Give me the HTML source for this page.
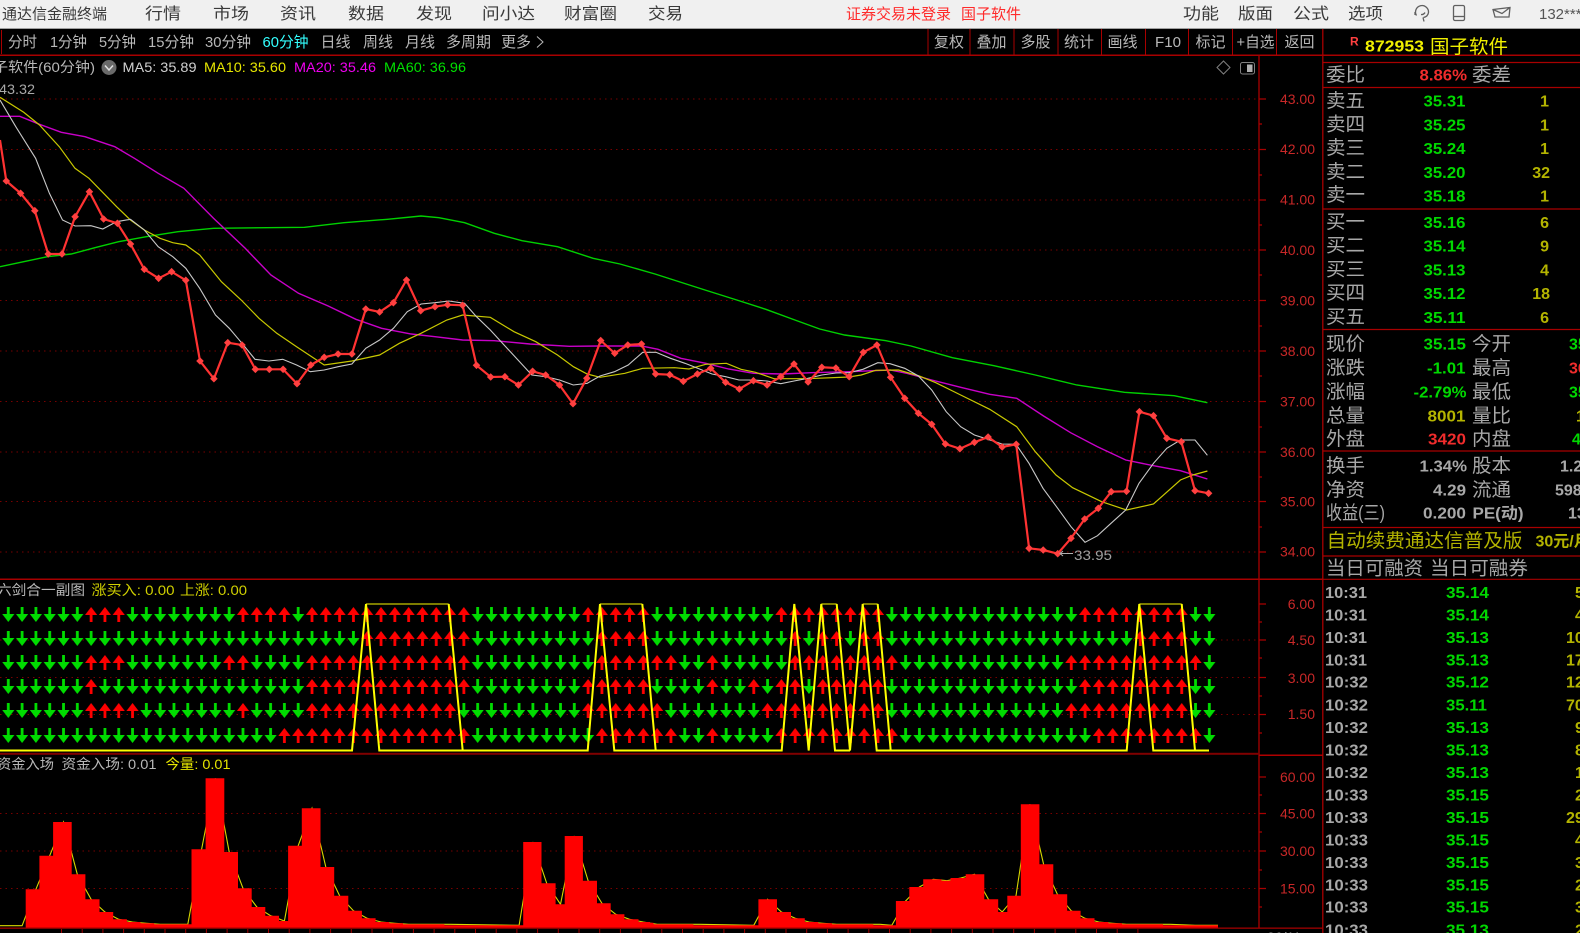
<!DOCTYPE html>
<html lang="zh"><head><meta charset="utf-8"><title>通达信金融终端</title>
<style>
html,body{margin:0;padding:0;background:#000;width:1580px;height:933px;overflow:hidden}
svg{display:block}
text{font-family:"Liberation Sans","Noto Sans CJK SC",sans-serif}
.m{font-size:16px;fill:#3a3a3a}
.t{font-size:15px;fill:#b8b8b8}
.l{font-size:19px;fill:#a8a8a8}
.v{font-size:16px;font-weight:bold}
.g{fill:#00d800}.r{fill:#f02c2c}.o{fill:#b4b400}.w{fill:#a8a8a8}
.a{font-size:14px;fill:#c82828;text-anchor:end}
.h{font-size:14px}
.e{text-anchor:end}
</style></head><body>
<svg width="1580" height="933" viewBox="0 0 1580 933" xmlns="http://www.w3.org/2000/svg">
<defs>
<pattern id="u" patternUnits="userSpaceOnUse" x="0" y="0" width="1" height="15" viewBox="0 0 13.805 15" preserveAspectRatio="none"><path fill="#f00" d="M6.9 0L13 8H8.300V15H5.500V8H0.800z"/></pattern>
<pattern id="d" patternUnits="userSpaceOnUse" x="0" y="0" width="1" height="15" viewBox="0 0 13.805 15" preserveAspectRatio="none"><path fill="#00dc00" d="M5.500 0H8.300V7H13L6.900 15L0.800 7H5.500z"/></pattern>
<marker id="k" markerUnits="userSpaceOnUse" markerWidth="8" markerHeight="8" refX="4" refY="4"><path d="M4 0.200L7.800 4L4 7.800L0.200 4z" fill="#ff4040"/></marker>
</defs>
<rect width="1580" height="933" fill="#000"/>

<!-- top bar -->
<rect width="1580" height="28" fill="#f0f0f0"/>
<rect y="28" width="1580" height="1" fill="#a0a0a0"/>
<text class="m" x="2" y="19" style="font-size:15px" textLength="105" lengthAdjust="spacingAndGlyphs">通达信金融终端</text>
<text class="m" x="145" y="19" textLength="36" lengthAdjust="spacingAndGlyphs">行情</text>
<text class="m" x="213" y="19" textLength="36" lengthAdjust="spacingAndGlyphs">市场</text>
<text class="m" x="280" y="19" textLength="36" lengthAdjust="spacingAndGlyphs">资讯</text>
<text class="m" x="348" y="19" textLength="36" lengthAdjust="spacingAndGlyphs">数据</text>
<text class="m" x="416" y="19" textLength="36" lengthAdjust="spacingAndGlyphs">发现</text>
<text class="m" x="482" y="19" textLength="53" lengthAdjust="spacingAndGlyphs">问小达</text>
<text class="m" x="564" y="19" textLength="53" lengthAdjust="spacingAndGlyphs">财富圈</text>
<text class="m" x="648" y="19" textLength="35" lengthAdjust="spacingAndGlyphs">交易</text>
<text x="846" y="19" style="font-size:15px;fill:#ff2a2a" textLength="105" lengthAdjust="spacingAndGlyphs">证券交易未登录</text>
<text x="961" y="19" style="font-size:15px;fill:#ff2a2a" textLength="60" lengthAdjust="spacingAndGlyphs">国子软件</text>
<text class="m" x="1183" y="19" textLength="36" lengthAdjust="spacingAndGlyphs">功能</text>
<text class="m" x="1238" y="19" textLength="35" lengthAdjust="spacingAndGlyphs">版面</text>
<text class="m" x="1293" y="19" textLength="36" lengthAdjust="spacingAndGlyphs">公式</text>
<text class="m" x="1348" y="19" textLength="35" lengthAdjust="spacingAndGlyphs">选项</text>
<g fill="none" stroke="#606060" stroke-width="1.300">
<path d="M1416.500 15.500A6.500 6.500 0 1 1 1428.500 12.500C1428 15.500 1426 17 1423.500 17.500M1423 17.500L1424 21.500"/><path d="M1415 12v3M1421 14.500a4 4 0 0 0 4 -2"/>
<rect x="1453.500" y="5.500" width="11" height="15" rx="1.500"/><path d="M1454 16.500h10"/>
<path d="M1493 9.500L1510 7.500L1509 17H1495z M1493 9.500L1502 13.500L1510 7.500"/>
</g>
<text x="1539" y="19" style="font-size:15px;fill:#555">132***</text>

<!-- toolbar -->
<rect x="1" y="30" width="1" height="24" fill="#a80000"/>
<rect y="54.500" width="1580" height="1.500" fill="#a80000"/>
<g>
<text class="t" x="8" y="47" textLength="29" lengthAdjust="spacingAndGlyphs">分时</text>
<text class="t" x="50" y="47" textLength="37" lengthAdjust="spacingAndGlyphs">1分钟</text>
<text class="t" x="99" y="47" textLength="37" lengthAdjust="spacingAndGlyphs">5分钟</text>
<text class="t" x="148" y="47" textLength="46" lengthAdjust="spacingAndGlyphs">15分钟</text>
<text class="t" x="205" y="47" textLength="46" lengthAdjust="spacingAndGlyphs">30分钟</text>
<text x="262.500" y="47" style="font-size:15px;fill:#33ffff" textLength="46" lengthAdjust="spacingAndGlyphs">60分钟</text>
<text class="t" x="320.500" y="47" textLength="30" lengthAdjust="spacingAndGlyphs">日线</text>
<text class="t" x="363" y="47" textLength="30" lengthAdjust="spacingAndGlyphs">周线</text>
<text class="t" x="405" y="47" textLength="30" lengthAdjust="spacingAndGlyphs">月线</text>
<text class="t" x="446" y="47" textLength="45" lengthAdjust="spacingAndGlyphs">多周期</text>
<text class="t" x="501" y="47" textLength="30" lengthAdjust="spacingAndGlyphs">更多</text>
<path d="M537 36.500L543 42L537 47.500" fill="none" stroke="#b8b8b8"/>
<text class="t" x="934" y="47" textLength="30" lengthAdjust="spacingAndGlyphs">复权</text>
<text class="t" x="976.500" y="47" textLength="30" lengthAdjust="spacingAndGlyphs">叠加</text>
<text class="t" x="1020.500" y="47" textLength="30" lengthAdjust="spacingAndGlyphs">多股</text>
<text class="t" x="1064" y="47" textLength="30" lengthAdjust="spacingAndGlyphs">统计</text>
<text class="t" x="1107.500" y="47" textLength="30" lengthAdjust="spacingAndGlyphs">画线</text>
<text class="t" x="1155" y="47" textLength="26" lengthAdjust="spacingAndGlyphs">F10</text>
<text class="t" x="1195.500" y="47" textLength="30" lengthAdjust="spacingAndGlyphs">标记</text>
<text class="t" x="1236.500" y="47" textLength="38" lengthAdjust="spacingAndGlyphs">+自选</text>
<text class="t" x="1284.500" y="47" textLength="30" lengthAdjust="spacingAndGlyphs">返回</text>
</g>
<path fill="none" stroke="#a80000" d="M928 29V55M970 29V55M1014 29V55M1058 29V55M1101.500 29V55M1145.500 29V55M1188.500 29V55M1232.500 29V55M1276.500 29V55"/>

<!-- main grid -->
<path fill="none" stroke="#780000" stroke-dasharray="1.500 4" d="M0 99H1259M0 149.500H1259M0 200H1259M0 250H1259M0 300.500H1259M0 351H1259M0 401.500H1259M0 452H1259M0 501.500H1259M0 552H1259M0 640H1259M0 677.500H1259M0 714.500H1259M0 813.500H1259M0 851H1259M0 888.500H1259"/>
<!-- axis -->
<path fill="none" stroke="#a80000" stroke-width="1.300" d="M1259 55V928M1322.800 29V933M1259 99h7M1259 124h3M1259 149.500h7M1259 175h3M1259 200h7M1259 225h3M1259 250h7M1259 275h3M1259 300.500h7M1259 326h3M1259 351h7M1259 376h3M1259 401.500h7M1259 427h3M1259 452h7M1259 477h3M1259 501.500h7M1259 527h3M1259 552h7M1259 604h7M1259 622h3M1259 640h7M1259 658h3M1259 677.500h7M1259 696h3M1259 714.500h7M1259 733h3M1259 777h7M1259 795h3M1259 813.500h7M1259 832h3M1259 851h7M1259 870h3M1259 888.500h7M1259 907h3"/>
<text class="a" x="1315" y="104">43.00</text><text class="a" x="1315" y="154">42.00</text><text class="a" x="1315" y="204.500">41.00</text><text class="a" x="1315" y="255">40.00</text><text class="a" x="1315" y="305.500">39.00</text><text class="a" x="1315" y="356">38.00</text><text class="a" x="1315" y="406.500">37.00</text><text class="a" x="1315" y="457">36.00</text><text class="a" x="1315" y="506.500">35.00</text><text class="a" x="1315" y="556.500">34.00</text>
<text class="a" x="1315" y="609">6.00</text><text class="a" x="1315" y="645">4.50</text><text class="a" x="1315" y="683">3.00</text><text class="a" x="1315" y="719">1.50</text>
<text class="a" x="1315" y="782">60.00</text><text class="a" x="1315" y="818.500">45.00</text><text class="a" x="1315" y="856">30.00</text><text class="a" x="1315" y="893.500">15.00</text>

<!-- panel headers -->
<text class="h" x="-7" y="72" style="fill:#b8b8b8" textLength="102" lengthAdjust="spacingAndGlyphs">子软件(60分钟)</text>
<circle cx="109" cy="67.500" r="7.500" fill="#6a6a6a"/><path d="M105 65.500L109 70L113 65.500" fill="none" stroke="#e0e0e0" stroke-width="1.500"/>
<text class="h" x="122.500" y="72" style="fill:#d0d0d0" textLength="74" lengthAdjust="spacingAndGlyphs">MA5: 35.89</text>
<text class="h" x="204" y="72" style="fill:#e6e600" textLength="82" lengthAdjust="spacingAndGlyphs">MA10: 35.60</text>
<text class="h" x="294" y="72" style="fill:#ee00ee" textLength="82" lengthAdjust="spacingAndGlyphs">MA20: 35.46</text>
<text class="h" x="384" y="72" style="fill:#00e000" textLength="82" lengthAdjust="spacingAndGlyphs">MA60: 36.96</text>
<text class="h" x="-1" y="94" style="fill:#a8a8a8" textLength="36" lengthAdjust="spacingAndGlyphs">43.32</text>
<path d="M1223.500 61L1230 67.500L1223.500 74L1217 67.500z" fill="none" stroke="#808080"/>
<rect x="1240.500" y="62.500" width="14" height="11.500" rx="2" fill="none" stroke="#808080"/><rect x="1247" y="64.500" width="5.500" height="7.500" fill="#b0b0b0"/>

<!-- price chart lines -->
<polyline fill="none" stroke="#00d000" stroke-width="1.400" points="0,266.700 23.700,261.700 47.400,256.700 71.200,254 94.900,247.700 118.600,241.700 146.300,236.700 177.900,231.700 213.500,228.300 304.500,227.300 344,222.700 387.500,219.300 421,216 438.900,217.700 464.600,222.700 494.300,233.300 522,240.700 557.500,246.700 593.100,258.300 620,264 655,274 705,290 736.800,300 765.800,309.300 794.900,320 819.700,329 844.600,335 886,340.700 911,346 952.400,357.700 993.900,365.700 1035.300,375 1076.800,385 1124.500,392.300 1174.200,395.700 1207.400,402.700"/>
<polyline fill="none" stroke="#c800c8" stroke-width="1.400" points="0,116.300 19.800,116.300 39.500,124.300 61.300,132.300 85,136.700 114.700,146.700 134.400,158.300 158.200,173.300 183.900,188.300 213.500,218.300 245.200,248.300 270.900,275 298.500,293.300 328.200,306 355.900,319.300 381.600,328.300 411.200,334 435,336.700 462.600,340 494.300,340.700 529.900,344 569.400,346.300 600,346 641.500,346 658,349.300 680.800,358.300 705.700,363.300 728.500,369 753.400,373.300 782.400,374 811.400,372.700 848.800,371.700 890.200,370 906.800,373.300 931.700,380 960.700,387.300 989.700,394.300 1016.700,398.300 1043.600,416 1070.600,432.700 1097.500,446.700 1125.700,460 1153.500,465.700 1180.400,470.700 1207.400,479"/>
<polyline fill="none" stroke="#c8c800" stroke-width="1.200" points="0,97.300 23.700,112.300 39.500,125 59.300,146.700 75,168.300 89,178.300 116.600,206.700 130.500,220 144.300,230 160,238.300 172.800,242.700 185.800,245 199.700,255 221.400,281.700 241.200,300 259,318.300 276.800,333.300 296.600,346.700 324.200,365 351.900,361 379.600,355 399.400,343.300 421,333.300 446.800,320 462.600,315 490.300,317.300 514,331.700 535.800,341.700 557.500,355 573.400,366.700 587.200,374 600,377.300 624.900,373.300 642.700,368.300 674.600,367.700 689,369 705.700,364.300 726.400,363.300 741,369.300 755.500,372.300 774,378.700 807.300,378.700 848.800,377 861.200,375 875.700,370.300 898.500,370 919.200,376 935.800,382.700 960.700,395 989.700,409.300 1016.700,426.700 1035.300,451.700 1056,475 1072.600,487.700 1101.700,501.700 1126.500,510 1153.500,504 1180.400,480 1192.900,475 1207.400,471"/>
<polyline fill="none" stroke="#c8c8c8" stroke-width="1.100" points="0,100 15.800,126.700 35.600,158.300 49.400,193.300 62.500,220 75.100,226 90.900,225.700 102.800,229 116.600,221.700 130.500,219.300 144.300,230 158.200,246.700 172.800,256.700 185.800,268.300 199.700,288.300 215.500,315 229.300,328.300 242,343.300 255,359.300 268.900,361 282.700,359.300 296.600,365 310.400,371.700 324.200,370 338.100,366.700 351.900,364 365.800,348.300 379.600,340 393.400,328.300 407.300,311.700 421.100,304 435,302.700 448.800,301 464.600,303.300 476.500,316.700 490.300,330 504.100,345 518,360 531.800,375 545.700,376.700 559.500,380 573.300,385 587.200,383.300 600,376 614.500,371.700 628.200,365 642.700,352.300 656,352.300 670.500,358.300 685,363.300 699.500,369 712,374 725.600,376.700 739,380 753.400,380 767,381 780.800,383.700 794,381 808,378.300 821.800,375 836,373 849,372.700 863,369.300 877.800,362.700 890,363.700 904.700,368.300 918.400,376 931.700,390 946.200,411.700 960.700,426.700 974.400,435 988,439.300 1002,444 1016,444.300 1029,463.300 1043,488.300 1057.700,508.300 1071,526.700 1085,542.300 1097.500,535.700 1111,523.300 1125.700,510 1139,483.300 1153.500,463.300 1166.800,448.300 1180.400,440 1195,440 1207.400,455.300"/>
<polyline fill="none" stroke="#ff3232" stroke-width="2.200" marker-mid="url(#k)" marker-end="url(#k)" points="0,140 6.300,181 20.600,193.300 34.800,210.700 48.200,254 62,254 75.100,216.700 89.400,191.700 103.600,219 117.400,223.300 130.500,244 144.300,269.300 158.600,278.300 171.600,271.700 185.800,280.300 200,361 213.900,378.700 227.800,342.700 242,345 255.400,369.300 269.300,369.300 283.100,369.300 297,383.700 310.800,365 324.200,357.300 338.100,354 351.900,354 365.800,309 379.600,312 393.400,302.700 406.500,280 420.700,310.700 435,306.700 447.600,304.700 462.600,305.300 476.500,365.300 490.700,377 504.900,376.700 518.400,385 532.600,371.300 545.700,375 559.500,385 573,403.700 586.800,378.300 600.700,340.500 614.700,353.300 627.800,345 641.500,344 655.600,374 669.700,374.700 683.300,381.300 697.400,374 710.700,368.300 725.600,382.300 739.300,389 753.400,380.700 767.100,385 780.800,376.700 794,364 808.100,382 821.800,367.300 835.900,368 849.200,376.700 863.300,352.300 876.900,345 890.600,377.300 904.700,398.300 918.400,413.300 931.700,424.300 945.400,444 959.900,448.700 974.400,442.300 988.100,437 1002.200,447 1016.200,444.300 1029.100,548.300 1043.200,550 1057.700,553.700 1071,538.300 1084.700,519 1098.300,508.300 1111.200,491.700 1126.500,491.300 1139.400,411.700 1153.500,415.700 1166.800,438.300 1181.300,441.700 1195,490.700 1208.600,493.300"/>
<path d="M1061 553.500h12" stroke="#b0b0b0" fill="none"/><path d="M1063 551l-3 2.500l3 2.500" stroke="#b0b0b0" fill="none"/>
<text x="1074" y="560" style="font-size:14px;fill:#a0a0a0" textLength="38" lengthAdjust="spacingAndGlyphs">33.95</text>

<!-- panel separators -->
<rect y="578.500" width="1323" height="1.500" fill="#a80000"/>
<rect y="752.800" width="1259" height="2" fill="#800000"/>
<rect x="1259" y="754.500" width="64" height="1.500" fill="#b00000"/>

<!-- panel 2 -->
<text class="h" x="-3" y="595" style="fill:#b8b8b8" textLength="88" lengthAdjust="spacingAndGlyphs">六剑合一副图</text>
<text class="h" x="91.500" y="595" style="fill:#d0d000" textLength="83" lengthAdjust="spacingAndGlyphs">涨买入: 0.00</text>
<text class="h" x="180" y="595" style="fill:#d0d000" textLength="67" lengthAdjust="spacingAndGlyphs">上涨: 0.00</text>

<g transform="translate(1.400,607) scale(13.805,1)">
<path fill="url(#d)" d="M0 0h6v15h-6zM9 0h8v15h-8zM21 0h1v15h-1zM34 0h8v15h-8zM47 0h9v15h-9zM64 0h14v15h-14zM86 0h2v15h-2z"/>
<path fill="url(#u)" d="M6 0h3v15h-3zM17 0h4v15h-4zM22 0h12v15h-12zM42 0h5v15h-5zM56 0h8v15h-8zM78 0h8v15h-8z"/>
</g>
<g transform="translate(1.400,631) scale(13.805,1)">
<path fill="url(#d)" d="M0 0h26v15h-26zM34 0h9v15h-9zM47 0h10v15h-10zM58 0h1v15h-1zM61 0h1v15h-1zM64 0h18v15h-18zM86 0h2v15h-2z"/>
<path fill="url(#u)" d="M26 0h8v15h-8zM43 0h4v15h-4zM57 0h1v15h-1zM59 0h2v15h-2zM62 0h2v15h-2zM82 0h4v15h-4z"/>
</g>
<g transform="translate(1.400,655) scale(13.805,1)">
<path fill="url(#d)" d="M0 0h6v15h-6zM9 0h7v15h-7zM18 0h4v15h-4zM34 0h9v15h-9zM49 0h2v15h-2zM52 0h5v15h-5zM65 0h12v15h-12zM87 0h1v15h-1z"/>
<path fill="url(#u)" d="M6 0h3v15h-3zM16 0h2v15h-2zM22 0h12v15h-12zM43 0h6v15h-6zM51 0h1v15h-1zM57 0h8v15h-8zM77 0h10v15h-10z"/>
</g>
<g transform="translate(1.400,679) scale(13.805,1)">
<path fill="url(#d)" d="M0 0h6v15h-6zM7 0h15v15h-15zM34 0h8v15h-8zM47 0h4v15h-4zM52 0h2v15h-2zM55 0h1v15h-1zM58 0h1v15h-1zM64 0h14v15h-14zM86 0h2v15h-2z"/>
<path fill="url(#u)" d="M6 0h1v15h-1zM22 0h12v15h-12zM42 0h5v15h-5zM51 0h1v15h-1zM54 0h1v15h-1zM56 0h2v15h-2zM59 0h5v15h-5zM78 0h8v15h-8z"/>
</g>
<g transform="translate(1.400,703) scale(13.805,1)">
<path fill="url(#d)" d="M0 0h6v15h-6zM10 0h7v15h-7zM18 0h4v15h-4zM33 0h9v15h-9zM48 0h7v15h-7zM64 0h13v15h-13zM86 0h2v15h-2z"/>
<path fill="url(#u)" d="M6 0h4v15h-4zM17 0h1v15h-1zM22 0h11v15h-11zM42 0h6v15h-6zM55 0h9v15h-9zM77 0h9v15h-9z"/>
</g>
<g transform="translate(1.400,728) scale(13.805,1)">
<path fill="url(#d)" d="M0 0h20v15h-20zM34 0h9v15h-9zM49 0h2v15h-2zM52 0h4v15h-4zM65 0h14v15h-14zM87 0h1v15h-1z"/>
<path fill="url(#u)" d="M20 0h14v15h-14zM43 0h6v15h-6zM51 0h1v15h-1zM56 0h9v15h-9zM79 0h8v15h-8z"/>
</g>
<path fill="none" stroke="#c8c800" stroke-width="1.300" d="M366 604H448.700M600 604H642.300M821.300 604H836.700M862.700 604H877.700M1139.300 604H1181.700"/>
<path fill="none" stroke="#ffff00" stroke-width="2" d="M0 750.500H352L366 604M448.700 604L462.700 750.500H587.700L600 604M366 604L379.300 750.500H462.700M642.300 604L655.700 750.500H781.700L794.300 604L808.700 750.500L821.300 604M600 604L614.300 750.500H655.700M836.700 604L850 750.500L862.700 604M821.300 604L835 750.500H850M877.700 604L890.700 750.500H1126.700L1139.300 604M862.700 604L876.700 750.500H890.700M1181.700 604L1195 750.500H1209M1139.300 604L1153.300 750.500H1195"/>

<!-- panel 3 -->
<text class="h" x="-3" y="769" style="fill:#b8b8b8" textLength="57" lengthAdjust="spacingAndGlyphs">资金入场</text>
<text class="h" x="61.500" y="769" style="fill:#b8b8b8" textLength="95" lengthAdjust="spacingAndGlyphs">资金入场: 0.01</text>
<text class="h" x="165.500" y="769" style="fill:#e6e600" textLength="65" lengthAdjust="spacingAndGlyphs">今量: 0.01</text>
<polyline fill="none" stroke="#d8d800" stroke-width="1.100" points="0,925.700 22.100,925.700 35.900,889.300 49.700,855.700 63.500,822 77.300,874.300 91.100,899.300 104.900,912 118.700,919.300 132.500,922 146.400,923.300 160.200,924.300 187.800,924.300 201.600,849.300 215.400,778.300 229.200,852 243,888.300 256.800,907 270.600,915.700 284.400,921 298.200,845.700 312,808.300 325.800,867 339.600,895.700 353.400,910.700 367.200,918.300 381,922 394.800,923.300 408.600,924.300 450,924.300 519.100,925.300 532.900,842 546.700,883.300 560.500,904.300 574.300,836 588.100,880.700 601.900,903.300 615.700,914.300 629.500,919.300 643.300,922 657.100,924.300 700,924.300 753.800,925.300 767.600,899.300 781.400,912 795.200,918.300 809,922 822.800,923.300 836.600,924.300 880,924.300 891.800,925.300 905.600,901 919.400,887 933.200,879.300 947,880.700 960.800,878 974.600,874.300 988.400,899.300 1002.200,912 1016,895.700 1029.800,804.300 1043.600,864.300 1057.400,894.300 1071.200,910.700 1085,918.300 1098.800,922 1112.600,923.300 1126.400,924.300 1170,924.300 1195,925.300 1218,925.300"/>
<path fill="#f00" d="M25.700 927.500V889.300H39.400V855.700H53.100V822H71.700V874.300H85.400V899.300H99.500V912H113.200V919.300H126.900V922H140.500V923.300H154.200V924.300H191.500V849.300H205.600V778.300H224.300V852H238V888.300H251.700V907H265.300V915.700H279V921H288.100V845.700H301.800V808.300H320.500V867H334.200V895.700H348.300V910.700H361.900V918.300H375.600V922H389.300V923.300H403V924.300H444.400V925.300H523.200V842H541.500V883.300H555.600V904.300H564.700V836H582.900V880.700H597V903.300H610.700V914.300H624.400V919.300H638.500V922H650V922.700H653.500V924.300H693.400V925.300H758.400V899.300H777V912H791V918.300H804.800V922H818.300V923.300H832V924.300H873.300V925.300H895.900V901H909.300V887H923.200V879.300H941.400V880.700H950.500V878H965.700V874.300H984.300V899.300H998.200V912H1007.300V895.700H1020.800V804.300H1039.400V864.300H1053.300V894.300H1067.200V910.700H1080.600V918.300H1094.500V922H1108.400V923.300H1122V924.300H1163V925.300H1218V927.500z"/>
<rect y="927.500" width="1323" height="1.300" fill="#a00000"/>
<path d="M61 931H1140" stroke="#a00000" stroke-width="4" stroke-dasharray="1 19.700" fill="none"/>
<text x="1267" y="942" style="font-size:14px;fill:#b0b0b0">06/11</text>

<!-- right panel lines -->
<path fill="none" stroke="#a80000" stroke-width="1.200" d="M1323 62.500H1580M1323 87.500H1580M1323 209H1580M1323 329.500H1580M1323 451H1580M1323 527.500H1580M1323 556H1580M1323 579.300H1580"/>

<!-- right panel header -->
<text x="1350" y="45.500" style="font-size:12px;font-weight:bold;fill:#ff4040">R</text>
<text x="1365" y="51.500" style="font-size:16px;font-weight:bold;fill:#f0f000" textLength="59" lengthAdjust="spacingAndGlyphs">872953</text>
<text x="1430" y="53" style="font-size:19px;fill:#f0f000" textLength="78" lengthAdjust="spacingAndGlyphs">国子软件</text>
<text class="l" x="1326" y="81" textLength="39" lengthAdjust="spacingAndGlyphs">委比</text>
<text class="v r" x="1419.500" y="80.500" textLength="47.500" lengthAdjust="spacingAndGlyphs">8.86%</text>
<text class="l" x="1472" y="81" textLength="39" lengthAdjust="spacingAndGlyphs">委差</text>

<!-- order book -->
<g transform="translate(0,-0.500)">
<text class="l" x="1326" y="107.500" textLength="39" lengthAdjust="spacingAndGlyphs">卖五</text><text class="v g" x="1423.500" y="107" textLength="42" lengthAdjust="spacingAndGlyphs">35.31</text><text class="v o e" x="1549" y="107">1</text>
<text class="l" x="1326" y="131" textLength="39" lengthAdjust="spacingAndGlyphs">卖四</text><text class="v g" x="1423.500" y="131" textLength="42" lengthAdjust="spacingAndGlyphs">35.25</text><text class="v o e" x="1549" y="131">1</text>
<text class="l" x="1326" y="154.500" textLength="39" lengthAdjust="spacingAndGlyphs">卖三</text><text class="v g" x="1423.500" y="154.500" textLength="42" lengthAdjust="spacingAndGlyphs">35.24</text><text class="v o e" x="1549" y="154.500">1</text>
<text class="l" x="1326" y="178.500" textLength="39" lengthAdjust="spacingAndGlyphs">卖二</text><text class="v g" x="1423.500" y="178.500" textLength="42" lengthAdjust="spacingAndGlyphs">35.20</text><text class="v o e" x="1550" y="178.500">32</text>
<text class="l" x="1326" y="201.500" textLength="39" lengthAdjust="spacingAndGlyphs">卖一</text><text class="v g" x="1423.500" y="202" textLength="42" lengthAdjust="spacingAndGlyphs">35.18</text><text class="v o e" x="1549" y="202">1</text>
<text class="l" x="1326" y="228.500" textLength="39" lengthAdjust="spacingAndGlyphs">买一</text><text class="v g" x="1423.500" y="228.500" textLength="42" lengthAdjust="spacingAndGlyphs">35.16</text><text class="v o e" x="1549" y="228.500">6</text>
<text class="l" x="1326" y="252" textLength="39" lengthAdjust="spacingAndGlyphs">买二</text><text class="v g" x="1423.500" y="252" textLength="42" lengthAdjust="spacingAndGlyphs">35.14</text><text class="v o e" x="1549" y="252">9</text>
<text class="l" x="1326" y="276" textLength="39" lengthAdjust="spacingAndGlyphs">买三</text><text class="v g" x="1423.500" y="276" textLength="42" lengthAdjust="spacingAndGlyphs">35.13</text><text class="v o e" x="1549" y="276">4</text>
<text class="l" x="1326" y="299.500" textLength="39" lengthAdjust="spacingAndGlyphs">买四</text><text class="v g" x="1423.500" y="299.500" textLength="42" lengthAdjust="spacingAndGlyphs">35.12</text><text class="v o e" x="1550" y="299.500">18</text>
<text class="l" x="1326" y="323.500" textLength="39" lengthAdjust="spacingAndGlyphs">买五</text><text class="v g" x="1423.500" y="323.500" textLength="42" lengthAdjust="spacingAndGlyphs">35.11</text><text class="v o e" x="1549" y="323.500">6</text>
</g>

<!-- quote -->
<g>
<text class="l" x="1326" y="350" textLength="39" lengthAdjust="spacingAndGlyphs">现价</text><text class="v g" x="1423.500" y="349.500" textLength="42.500" lengthAdjust="spacingAndGlyphs">35.15</text><text class="l" x="1472" y="350" textLength="39" lengthAdjust="spacingAndGlyphs">今开</text><text class="v g" x="1569" y="349.500">35.26</text>
<text class="l" x="1326" y="374" textLength="39" lengthAdjust="spacingAndGlyphs">涨跌</text><text class="v g" x="1427" y="373.500" textLength="38.500" lengthAdjust="spacingAndGlyphs">-1.01</text><text class="l" x="1472" y="374" textLength="39" lengthAdjust="spacingAndGlyphs">最高</text><text class="v r" x="1569" y="373.500">36.00</text>
<text class="l" x="1326" y="398" textLength="39" lengthAdjust="spacingAndGlyphs">涨幅</text><text class="v g" x="1413.500" y="397.500" textLength="53" lengthAdjust="spacingAndGlyphs">-2.79%</text><text class="l" x="1472" y="398" textLength="39" lengthAdjust="spacingAndGlyphs">最低</text><text class="v g" x="1569" y="397.500">35.00</text>
<text class="l" x="1326" y="422" textLength="39" lengthAdjust="spacingAndGlyphs">总量</text><text class="v o" x="1427.500" y="421.500" textLength="38" lengthAdjust="spacingAndGlyphs">8001</text><text class="l" x="1472" y="422" textLength="39" lengthAdjust="spacingAndGlyphs">量比</text><text class="v o" x="1576" y="421.500">1</text>
<text class="l" x="1326" y="445" textLength="39" lengthAdjust="spacingAndGlyphs">外盘</text><text class="v r" x="1428" y="444.500" textLength="38" lengthAdjust="spacingAndGlyphs">3420</text><text class="l" x="1472" y="445" textLength="39" lengthAdjust="spacingAndGlyphs">内盘</text><text class="v g" x="1572" y="444.500">4581</text>
<text class="l" x="1326" y="472" textLength="39" lengthAdjust="spacingAndGlyphs">换手</text><text class="v w" x="1419.500" y="471.500" textLength="47.500" lengthAdjust="spacingAndGlyphs">1.34%</text><text class="l" x="1472" y="472" textLength="39" lengthAdjust="spacingAndGlyphs">股本</text><text class="v w" x="1560" y="471.500">1.20亿</text>
<text class="l" x="1326" y="496" textLength="39" lengthAdjust="spacingAndGlyphs">净资</text><text class="v w" x="1433" y="495.500" textLength="33" lengthAdjust="spacingAndGlyphs">4.29</text><text class="l" x="1472" y="496" textLength="39" lengthAdjust="spacingAndGlyphs">流通</text><text class="v w" x="1555" y="495.500">598万</text>
<text class="l" x="1326" y="519" textLength="59" lengthAdjust="spacingAndGlyphs">收益(三)</text><text class="v w" x="1423" y="518.500" textLength="43" lengthAdjust="spacingAndGlyphs">0.200</text><text class="v w" x="1472.500" y="518.500" textLength="51" lengthAdjust="spacingAndGlyphs">PE(动)</text><text class="v w" x="1568" y="518.500">13</text>
<text x="1326.500" y="547" style="font-size:19px;fill:#b4b400" textLength="196" lengthAdjust="spacingAndGlyphs">自动续费通达信普及版</text><text x="1535.500" y="546.500" style="font-size:16px;font-weight:bold;fill:#b4b400">30元/月</text>
<text class="l" x="1326" y="574.500" textLength="97" lengthAdjust="spacingAndGlyphs">当日可融资</text><text class="l" x="1430" y="574.500" textLength="98" lengthAdjust="spacingAndGlyphs">当日可融券</text>
</g>

<!-- ticks -->
<g transform="translate(0,-0.700)">
<text class="v w" x="1325" y="598.500" textLength="42" lengthAdjust="spacingAndGlyphs">10:31</text><text class="v g" x="1446" y="598.500" textLength="43" lengthAdjust="spacingAndGlyphs">35.14</text><text class="v o" x="1575" y="598.500">5</text>
<text class="v w" x="1325" y="621" textLength="42" lengthAdjust="spacingAndGlyphs">10:31</text><text class="v g" x="1446" y="621" textLength="43" lengthAdjust="spacingAndGlyphs">35.14</text><text class="v o" x="1575" y="621">4</text>
<text class="v w" x="1325" y="643.500" textLength="42" lengthAdjust="spacingAndGlyphs">10:31</text><text class="v g" x="1446" y="643.500" textLength="43" lengthAdjust="spacingAndGlyphs">35.13</text><text class="v o" x="1566" y="643.500">10</text>
<text class="v w" x="1325" y="666" textLength="42" lengthAdjust="spacingAndGlyphs">10:31</text><text class="v g" x="1446" y="666" textLength="43" lengthAdjust="spacingAndGlyphs">35.13</text><text class="v o" x="1566" y="666">17</text>
<text class="v w" x="1325" y="688" textLength="43" lengthAdjust="spacingAndGlyphs">10:32</text><text class="v g" x="1446" y="688" textLength="43" lengthAdjust="spacingAndGlyphs">35.12</text><text class="v o" x="1566" y="688">12</text>
<text class="v w" x="1325" y="711" textLength="43" lengthAdjust="spacingAndGlyphs">10:32</text><text class="v g" x="1446" y="711" textLength="41" lengthAdjust="spacingAndGlyphs">35.11</text><text class="v o" x="1566" y="711">70</text>
<text class="v w" x="1325" y="733.500" textLength="43" lengthAdjust="spacingAndGlyphs">10:32</text><text class="v g" x="1446" y="733.500" textLength="43" lengthAdjust="spacingAndGlyphs">35.13</text><text class="v o" x="1575" y="733.500">9</text>
<text class="v w" x="1325" y="756" textLength="43" lengthAdjust="spacingAndGlyphs">10:32</text><text class="v g" x="1446" y="756" textLength="43" lengthAdjust="spacingAndGlyphs">35.13</text><text class="v o" x="1575" y="756">8</text>
<text class="v w" x="1325" y="778.500" textLength="43" lengthAdjust="spacingAndGlyphs">10:32</text><text class="v g" x="1446" y="778.500" textLength="43" lengthAdjust="spacingAndGlyphs">35.13</text><text class="v o" x="1575" y="778.500">1</text>
<text class="v w" x="1325" y="801" textLength="43" lengthAdjust="spacingAndGlyphs">10:33</text><text class="v g" x="1446" y="801" textLength="43" lengthAdjust="spacingAndGlyphs">35.15</text><text class="v o" x="1575" y="801">2</text>
<text class="v w" x="1325" y="823.500" textLength="43" lengthAdjust="spacingAndGlyphs">10:33</text><text class="v g" x="1446" y="823.500" textLength="43" lengthAdjust="spacingAndGlyphs">35.15</text><text class="v o" x="1566" y="823.500">29</text>
<text class="v w" x="1325" y="846" textLength="43" lengthAdjust="spacingAndGlyphs">10:33</text><text class="v g" x="1446" y="846" textLength="43" lengthAdjust="spacingAndGlyphs">35.15</text><text class="v o" x="1575" y="846">4</text>
<text class="v w" x="1325" y="868.500" textLength="43" lengthAdjust="spacingAndGlyphs">10:33</text><text class="v g" x="1446" y="868.500" textLength="43" lengthAdjust="spacingAndGlyphs">35.15</text><text class="v o" x="1575" y="868.500">3</text>
<text class="v w" x="1325" y="891" textLength="43" lengthAdjust="spacingAndGlyphs">10:33</text><text class="v g" x="1446" y="891" textLength="43" lengthAdjust="spacingAndGlyphs">35.15</text><text class="v o" x="1575" y="891">2</text>
<text class="v w" x="1325" y="913" textLength="43" lengthAdjust="spacingAndGlyphs">10:33</text><text class="v g" x="1446" y="913" textLength="43" lengthAdjust="spacingAndGlyphs">35.15</text><text class="v o" x="1575" y="913">3</text>
<text class="v w" x="1325" y="936" textLength="43" lengthAdjust="spacingAndGlyphs">10:33</text><text class="v g" x="1446" y="936" textLength="43" lengthAdjust="spacingAndGlyphs">35.13</text><text class="v o" x="1575" y="936">2</text>
</g>
</svg>
</body></html>
